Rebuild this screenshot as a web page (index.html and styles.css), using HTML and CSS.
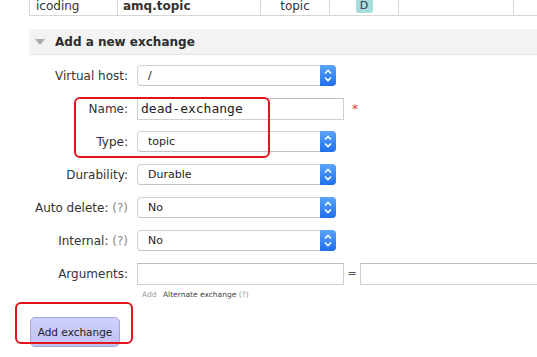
FILE: index.html
```html
<!DOCTYPE html>
<html lang="en">
<head>
    <meta charset="UTF-8">
    <meta name="viewport" content="width=device-width, initial-scale=1.0">
    <title>Exchanges</title>
    <link rel="stylesheet" href="styles.css">
</head>
<body>
    <div class="page">
        <div class="list-clip">
            <table class="list">
                <tbody>
                    <tr>
                        <td class="col-vhost">icoding</td>
                        <td class="col-name"><b>amq.topic</b></td>
                        <td class="col-type">topic</td>
                        <td class="col-features"><span class="badge">D</span></td>
                        <td class="col-rate"></td>
                        <td class="col-more"></td>
                    </tr>
                </tbody>
            </table>
        </div>

        <div class="section">
            <h2 class="section-title">
                <svg class="caret" width="10" height="6" viewBox="0 0 10 6"><polygon points="0,0 10,0 5,6" fill="#a9a9a9"/></svg>
                Add a new exchange
            </h2>

            <table class="form">
                <tr>
                    <th>Virtual host:</th>
                    <td>
                        <div class="select">
                            <span class="value">/</span>
                            <span class="stepper"><svg width="16" height="21" viewBox="0 0 16 21"><polyline points="5,8.5 8,5.5 11,8.5" /><polyline points="5,12.5 8,15.5 11,12.5" /></svg></span>
                        </div>
                    </td>
                </tr>
                <tr>
                    <th>Name:</th>
                    <td>
                        <input class="text mono" type="text" value="dead-exchange">
                        <span class="req">*</span>
                    </td>
                </tr>
                <tr>
                    <th>Type:</th>
                    <td>
                        <div class="select">
                            <span class="value">topic</span>
                            <span class="stepper"><svg width="16" height="21" viewBox="0 0 16 21"><polyline points="5,8.5 8,5.5 11,8.5" /><polyline points="5,12.5 8,15.5 11,12.5" /></svg></span>
                        </div>
                    </td>
                </tr>
                <tr>
                    <th>Durability:</th>
                    <td>
                        <div class="select">
                            <span class="value">Durable</span>
                            <span class="stepper"><svg width="16" height="21" viewBox="0 0 16 21"><polyline points="5,8.5 8,5.5 11,8.5" /><polyline points="5,12.5 8,15.5 11,12.5" /></svg></span>
                        </div>
                    </td>
                </tr>
                <tr>
                    <th>Auto delete: <span class="help">(?)</span></th>
                    <td>
                        <div class="select">
                            <span class="value">No</span>
                            <span class="stepper"><svg width="16" height="21" viewBox="0 0 16 21"><polyline points="5,8.5 8,5.5 11,8.5" /><polyline points="5,12.5 8,15.5 11,12.5" /></svg></span>
                        </div>
                    </td>
                </tr>
                <tr>
                    <th>Internal: <span class="help">(?)</span></th>
                    <td>
                        <div class="select">
                            <span class="value">No</span>
                            <span class="stepper"><svg width="16" height="21" viewBox="0 0 16 21"><polyline points="5,8.5 8,5.5 11,8.5" /><polyline points="5,12.5 8,15.5 11,12.5" /></svg></span>
                        </div>
                    </td>
                </tr>
                <tr>
                    <th>Arguments:</th>
                    <td>
                        <div class="args">
                            <input class="text" type="text">
                            <span class="eq">=</span>
                            <input class="text text-wide" type="text">
                        </div>
                    </td>
                </tr>
                <tr class="hint-row">
                    <th></th>
                    <td class="hint">
                        <span class="muted">Add</span>
                        <span>Alternate exchange <span class="muted">(?)</span></span>
                    </td>
                </tr>
            </table>

            <button class="submit">Add exchange</button>
        </div>

        <!-- red highlight marks drawn over the form -->
        <div class="mark mark-name"></div>
        <div class="mark mark-submit"></div>
    </div>
</body>
</html>
```

FILE: styles.css
```css
html, body {
    overflow: hidden;
}

body {
    margin: 0;
    background: #fff;
    font-family: "DejaVu Sans", Verdana, sans-serif;
    color: #333;
}

.page {
    position: relative;
    padding-left: 29px;
    height: 357px;
    overflow: hidden;
}

/* exchange list, cut off at the top of the window */
.list-clip {
    height: 16px;
    display: flex;
    align-items: flex-end;
    overflow: hidden;
}

.list {
    border-collapse: collapse;
    table-layout: fixed;
    width: 508px;
    font-size: 12px;
    line-height: 14px;
}

.list td {
    box-sizing: border-box;
    border: 1px solid #d6d6d6;
    padding: 6px 5px 2px;
    white-space: nowrap;
}

.list .col-vhost { width: 88px; padding-left: 6px; }
.list .col-name { width: 143px; }
.list .col-type { width: 69px; text-align: center; }
.list .col-features { width: 69px; text-align: center; }
.list .col-rate { width: 115px; }
.list .col-more { border-right: 0; }

.badge {
    display: inline-block;
    width: 17px;
    background: #a6dcdc;
    color: #335;
    border-radius: 3px;
    font-size: 11px;
    line-height: 14px;
}

/* section */
.section {
    margin-top: 13px;
}

.section-title {
    display: flex;
    align-items: center;
    gap: 10px;
    margin: 0;
    height: 25px;
    padding-left: 6px;
    background: #f3f3f3;
    border-bottom: 1px solid #e4e4e4;
    font-size: 12px;
    font-weight: bold;
    color: #2c2c2c;
}

.form {
    border-collapse: collapse;
    margin-top: 4px;
}

.form tr {
    height: 33px;
}

.form th {
    width: 99px;
    min-width: 99px;
    padding: 0 9px 0 0;
    text-align: right;
    font-weight: normal;
    font-size: 12px;
    color: #333;
    white-space: nowrap;
}

.form td {
    padding: 0;
    white-space: nowrap;
}

.help {
    color: #8a8a8a;
}

.select {
    display: flex;
    box-sizing: border-box;
    width: 199px;
    height: 21px;
    border: 1px solid #d2d2d2;
    border-bottom-color: #c2c2c2;
    border-radius: 4px;
    background: #fff;
}

.select .value {
    flex: 1;
    padding-left: 10px;
    font-size: 11px;
    line-height: 19px;
    color: #222;
}

.stepper {
    width: 16px;
    margin: -1px -1px -1px 0;
    border-radius: 0 4px 4px 0;
    background: linear-gradient(#5aa5fb, #1f6fea);
}

.stepper svg {
    display: block;
    fill: none;
    stroke: #fff;
    stroke-width: 1.6;
}

.text {
    box-sizing: border-box;
    width: 207px;
    height: 22px;
    margin: 0;
    padding: 0 3px;
    border: 1px solid #cfcfcf;
    border-top-color: #bdbdbd;
    border-radius: 0;
    font-family: "DejaVu Sans", sans-serif;
    font-size: 12px;
    color: #222;
    vertical-align: middle;
}

.mono {
    font-family: "DejaVu Sans Mono", monospace;
    font-size: 13px;
}

.req {
    margin-left: 3px;
    color: #e53a3a;
    font-size: 12px;
    vertical-align: middle;
}

/* the second argument field runs to the window edge */
.args {
    display: flex;
    align-items: center;
    width: 207px;
}

.args .text {
    flex-shrink: 0;
}

.args .text-wide {
    width: 180px;
    border-right: 0;
}

.eq {
    flex-shrink: 0;
    width: 16px;
    text-align: center;
    font-size: 11px;
    color: #555;
}

.hint-row {
    height: 10px !important;
}

.form .hint {
    padding-left: 5px;
    font-size: 7.5px;
    line-height: 10px;
    color: #444;
}

.hint .muted {
    color: #999;
    margin-right: 4px;
}

.submit {
    display: block;
    margin: 17px 0 0 1px;
    width: 90px;
    height: 30px;
    border: 1px solid #a6a6dd;
    border-radius: 5px;
    background: linear-gradient(#d0d0fb, #c1c1f3);
    font-family: "DejaVu Sans", sans-serif;
    font-size: 10.5px;
    color: #222;
    padding: 0;
}

/* annotation marks */
.mark {
    position: absolute;
    box-sizing: border-box;
    border: 2.5px solid #e3141c;
    border-radius: 6px;
}

.mark-name {
    left: 74px;
    top: 97px;
    width: 196px;
    height: 61px;
}

.mark-submit {
    left: 15px;
    top: 302px;
    width: 118px;
    height: 42px;
}
```
